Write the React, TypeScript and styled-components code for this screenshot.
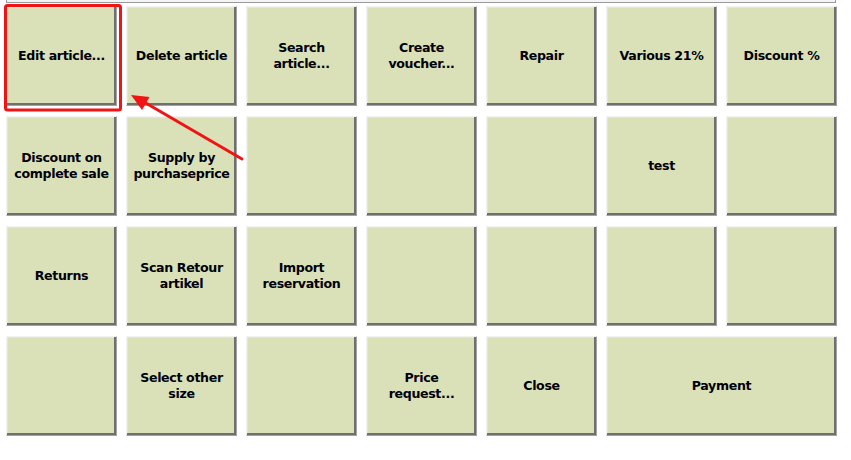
import styled, { createGlobalStyle } from "styled-components";

const GlobalStyle = createGlobalStyle`
  html, body {
    margin: 0;
    padding: 0;
    background: #ffffff;
  }
  body {
    font-family: "DejaVu Sans", Verdana, sans-serif;
  }
`;

const Screen = styled.div`
  position: relative;
  width: 851px;
  height: 460px;
  overflow: hidden;
  background: #ffffff;
`;

// bottom edge of the panel that sits above the button pad
const TopPanel = styled.div`
  margin: 0 15px 0 6px;
  height: 2px;
  border: 1px solid #9a9a9a;
  border-top: none;
  background: #f4f4f4;
`;

const Pad = styled.div`
  display: grid;
  grid-template-columns: repeat(7, 111px);
  grid-auto-rows: 100px;
  column-gap: 9px;
  row-gap: 10px;
  padding: 3px 0 0 6px;
`;

const Key = styled.button<{ $span?: number }>`
  grid-column: span ${(p) => p.$span ?? 1};
  box-sizing: border-box;
  margin: 0;
  padding: 0 2px;
  display: flex;
  align-items: center;
  justify-content: center;
  background: #dae1b9;
  border: 1px solid;
  border-color: #f2f2f2 #a3a3a3 #a3a3a3 #f2f2f2;
  box-shadow: inset -2px -2px 0 #6f6f6f, inset 1px 1px 0 #e4e4e4;
  color: #000008;
  font-family: "DejaVu Sans", Verdana, sans-serif;
  font-weight: bold;
  font-size: 12.6px;
  line-height: 16px;
  letter-spacing: -0.35px;
  white-space: pre-line;
  text-align: center;
  cursor: pointer;
`;

const Callout = styled.svg`
  position: absolute;
  left: 0;
  top: 0;
  pointer-events: none;
`;

type KeyDef = { label: string; span?: number };

const keys: KeyDef[] = [
  { label: "Edit article..." },
  { label: "Delete article" },
  { label: "Search\narticle..." },
  { label: "Create\nvoucher..." },
  { label: "Repair" },
  { label: "Various 21%" },
  { label: "Discount %" },

  { label: "Discount on\ncomplete sale" },
  { label: "Supply by\npurchaseprice" },
  { label: "" },
  { label: "" },
  { label: "" },
  { label: "test" },
  { label: "" },

  { label: "Returns" },
  { label: "Scan Retour\nartikel" },
  { label: "Import\nreservation" },
  { label: "" },
  { label: "" },
  { label: "" },
  { label: "" },

  { label: "" },
  { label: "Select other\nsize" },
  { label: "" },
  { label: "Price\nrequest..." },
  { label: "Close" },
  { label: "Payment", span: 2 },
];

function App() {
  return (
    <Screen>
      <GlobalStyle />
      <TopPanel />
      <Pad>
        {keys.map((k, i) => (
          <Key key={i} $span={k.span}>
            {k.label}
          </Key>
        ))}
      </Pad>
      <Callout width="851" height="460" viewBox="0 0 851 460">
        <rect
          x="5.5"
          y="5.5"
          width="115"
          height="104.5"
          rx="2"
          fill="none"
          stroke="#f01414"
          strokeWidth="3"
        />
        <line
          x1="242"
          y1="159"
          x2="144"
          y2="102"
          stroke="#f01414"
          strokeWidth="3"
          strokeLinecap="round"
        />
        <polygon points="131,95 149.5,97 142,110" fill="#f01414" />
      </Callout>
    </Screen>
  );
}

export default App;
